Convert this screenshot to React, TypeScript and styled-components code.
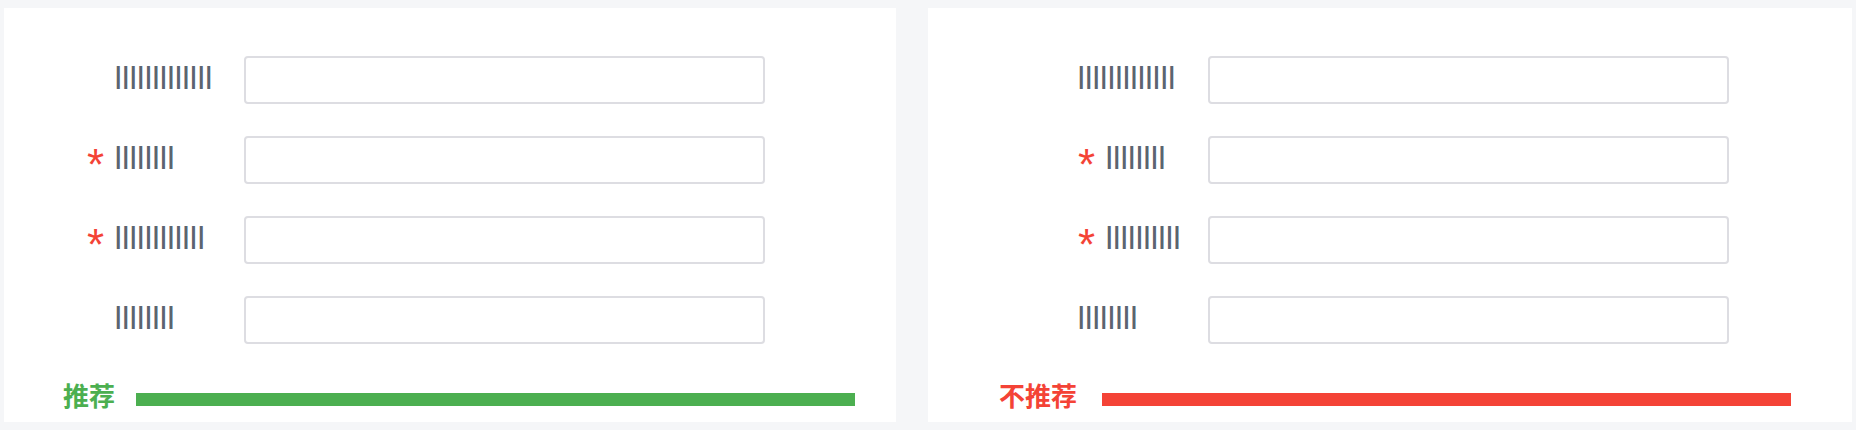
import React from "react";
import styled, { createGlobalStyle } from "styled-components";

const Global = createGlobalStyle`
  html, body {
    margin: 0;
    padding: 0;
    background: #f5f6f8;
  }
  body {
    font-family: "Liberation Sans", Arial, sans-serif;
  }
`;

const Page = styled.div`
  display: flex;
  gap: 32px;
  padding: 8px 4px;
  height: 414px;
`;

const Panel = styled.section<{ $width: number; $labelStart: number }>`
  width: ${(p) => p.$width}px;
  background: #ffffff;
  box-sizing: border-box;
  padding: 48px 0 0 ${(p) => p.$labelStart}px;
  display: flex;
  flex-direction: column;
`;

const Form = styled.div`
  display: flex;
  flex-direction: column;
  gap: 32px;
`;

const Row = styled.div`
  display: flex;
  align-items: center;
  height: 48px;
`;

const Label = styled.label<{ $width: number }>`
  display: flex;
  align-items: flex-start;
  width: ${(p) => p.$width}px;
  height: 48px;
  flex-shrink: 0;
`;

const Star = styled.span<{ $hang: boolean }>`
  font-family: "Liberation Sans", Arial, sans-serif;
  font-size: 44px;
  line-height: 48px;
  height: 48px;
  padding-top: 5px;
  box-sizing: border-box;
  color: #f44336;
  margin-left: ${(p) => (p.$hang ? "-28px" : "0")};
  margin-right: 13px;
  width: 15px;
  overflow: visible;
`;

const LabelText = styled.span`
  font-family: "Liberation Sans", Arial, sans-serif;
  font-weight: 700;
  font-size: 23px;
  line-height: 41px;
  letter-spacing: 1.1px;
  color: #5b6470;
  white-space: nowrap;
`;

const Input = styled.input`
  box-sizing: border-box;
  width: 521px;
  height: 48px;
  border: 2px solid #dddde2;
  border-radius: 4px;
  background: #fff;
  outline: none;
  padding: 0 12px;
  font-size: 16px;
`;

const Footer = styled.div<{ $top: number }>`
  display: flex;
  align-items: flex-start;
  margin-top: ${(p) => p.$top}px;
`;

const Verdict = styled.span<{ $color: string; $offset: number }>`
  font-family: "Noto Sans CJK SC", "Noto Sans", sans-serif;
  font-weight: 700;
  font-size: 26px;
  line-height: 26px;
  color: ${(p) => p.$color};
  margin-left: ${(p) => p.$offset}px;
`;

const Bar = styled.div<{ $color: string; $width: number; $gap: number }>`
  height: 13px;
  margin-top: 11px;
  margin-left: ${(p) => p.$gap}px;
  width: ${(p) => p.$width}px;
  background: ${(p) => p.$color};
`;

type Field = { bars: number; required: boolean };

type PanelProps = {
  width: number;
  labelStart: number;
  labelWidth: number;
  hang: boolean;
  fields: Field[];
  verdict: string;
  color: string;
  verdictOffset: number;
  barGap: number;
  barWidth: number;
};

function FormPanel(props: PanelProps) {
  return (
    <Panel $width={props.width} $labelStart={props.labelStart}>
      <Form>
        {props.fields.map((f, i) => (
          <Row key={i}>
            <Label $width={props.labelWidth}>
              {f.required && <Star $hang={props.hang}>*</Star>}
              <LabelText>{"|".repeat(f.bars)}</LabelText>
            </Label>
            <Input />
          </Row>
        ))}
      </Form>
      <Footer $top={38}>
        <Verdict $color={props.color} $offset={props.verdictOffset}>
          {props.verdict}
        </Verdict>
        <Bar $color={props.color} $width={props.barWidth} $gap={props.barGap} />
      </Footer>
    </Panel>
  );
}

export default function App() {
  return (
    <>
      <Global />
      <Page>
        <FormPanel
          width={892}
          labelStart={111}
          labelWidth={129}
          hang={true}
          fields={[
            { bars: 13, required: false },
            { bars: 8, required: true },
            { bars: 12, required: true },
            { bars: 8, required: false },
          ]}
          verdict="推荐"
          color="#4caf50"
          verdictOffset={-52}
          barGap={21}
          barWidth={719}
        />
        <FormPanel
          width={924}
          labelStart={150}
          labelWidth={130}
          hang={false}
          fields={[
            { bars: 13, required: false },
            { bars: 8, required: true },
            { bars: 10, required: true },
            { bars: 8, required: false },
          ]}
          verdict="不推荐"
          color="#f44336"
          verdictOffset={-79}
          barGap={25}
          barWidth={689}
        />
      </Page>
    </>
  );
}
